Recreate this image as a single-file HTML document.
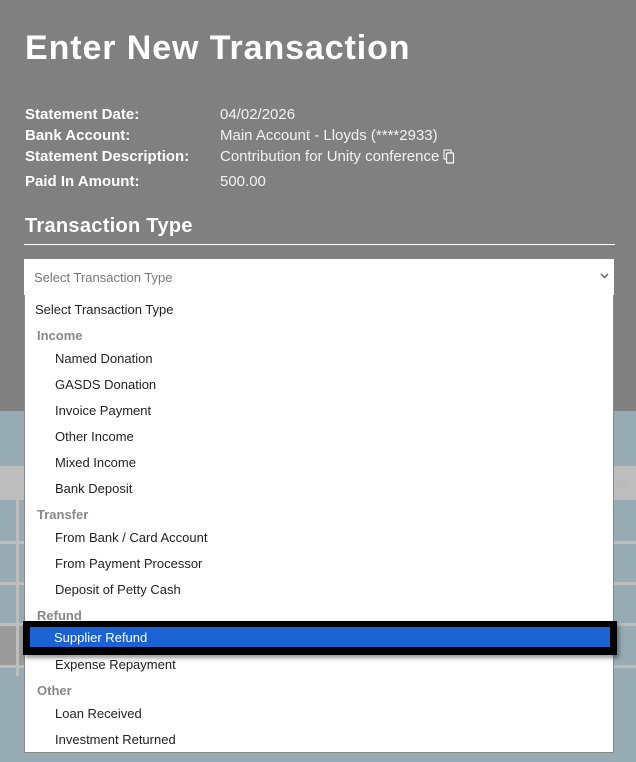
<!DOCTYPE html>
<html><head><style>
*{margin:0;padding:0;box-sizing:border-box}
body{width:636px;height:762px;overflow:hidden;position:relative;background:#97abb5;font-family:"Liberation Sans",sans-serif;}
.top{position:absolute;left:0;top:0;width:636px;height:411px;background:#808080}
.band{position:absolute;left:0;top:466px;width:636px;height:34px;background:#bdbdbd}
.hl{position:absolute;height:3px;background:#bdbdbd;left:0;width:636px}
.vl{position:absolute;left:16px;width:3px;top:500px;height:176px;background:#bdbdbd}
h1{position:absolute;left:25px;top:29px;font-size:34px;font-weight:bold;color:#fff;letter-spacing:0.9px}
.row{position:absolute;left:25px;font-size:15px;color:#fff}
.row b{display:inline-block;width:195px}
.row span{color:#f2f2f2}
h2{position:absolute;left:25px;top:215px;font-size:20px;font-weight:bold;color:#fff;letter-spacing:0.3px}
.line{position:absolute;left:24px;top:244px;width:591px;height:1px;background:#fff}
.sel{position:absolute;left:24px;top:259px;width:590px;height:36px;background:#fff;font-size:13px;color:#777;padding:11px 0 0 10px}
.sel svg{position:absolute;right:5px;top:14px}
.list{position:absolute;left:24px;top:295px;width:590px;height:458px;background:#fff;border:1px solid #888;border-top:none;font-size:13px;color:#222}
.it{position:absolute;left:30px}
.g{position:absolute;left:12px;color:#888;font-weight:bold}
.hi{position:absolute;left:-2px;top:326px;width:594px;height:34px;background:#000;box-shadow:2px 3px 4px rgba(0,0,0,.4)}
.hi div{position:absolute;left:7px;top:6px;width:580px;height:20px;background:#1b63d4;color:#fff;padding:3px 0 0 24px}
</style></head><body>
<div class="top"></div>
<div class="band"></div>
<div class="hl" style="top:541px"></div>
<div class="hl" style="top:582px"></div>
<div class="hl" style="top:623px"></div>
<div class="hl" style="top:665px"></div>
<div style="position:absolute;left:0;top:626px;width:24px;height:39px;background:#9a9a9a"></div>
<div class="vl"></div>
<div style="position:absolute;left:612px;top:477px;font-size:13px;color:#a7bcc6;font-family:'Liberation Mono',monospace">ce</div>
<h1>Enter New Transaction</h1>
<div class="row" style="top:106px"><b>Statement Date:</b><span>04/02/2026</span></div>
<div class="row" style="top:127px"><b>Bank Account:</b><span>Main Account - Lloyds (****2933)</span></div>
<div class="row" style="top:148px"><b>Statement Description:</b><span>Contribution for Unity conference <svg width="12" height="15" viewBox="0 0 12 15" style="vertical-align:-3px"><rect x="1" y="1" width="7" height="9" fill="none" stroke="#fff" stroke-width="1"/><rect x="3.5" y="4" width="7" height="10" rx="1" fill="#808080" stroke="#fff" stroke-width="1.2"/></svg></span></div>
<div class="row" style="top:173px"><b>Paid In Amount:</b><span>500.00</span></div>
<h2>Transaction Type</h2>
<div class="line"></div>
<div class="sel">Select Transaction Type<svg width="9" height="6" viewBox="0 0 9 6"><path d="M1 1l3.5 3.5L8 1" fill="none" stroke="#666" stroke-width="1.5"/></svg></div>
<div class="list">
<div class="it" style="left:10px;top:7px">Select Transaction Type</div>
<div class="g" style="top:33px">Income</div>
<div class="it" style="top:56px">Named Donation</div>
<div class="it" style="top:82px">GASDS Donation</div>
<div class="it" style="top:108px">Invoice Payment</div>
<div class="it" style="top:134px">Other Income</div>
<div class="it" style="top:160px">Mixed Income</div>
<div class="it" style="top:186px">Bank Deposit</div>
<div class="g" style="top:212px">Transfer</div>
<div class="it" style="top:235px">From Bank / Card Account</div>
<div class="it" style="top:261px">From Payment Processor</div>
<div class="it" style="top:287px">Deposit of Petty Cash</div>
<div class="g" style="top:313px">Refund</div>
<div class="hi"><div>Supplier Refund</div></div>
<div class="it" style="top:362px">Expense Repayment</div>
<div class="g" style="top:388px">Other</div>
<div class="it" style="top:411px">Loan Received</div>
<div class="it" style="top:437px">Investment Returned</div>
</div>
</body></html>
